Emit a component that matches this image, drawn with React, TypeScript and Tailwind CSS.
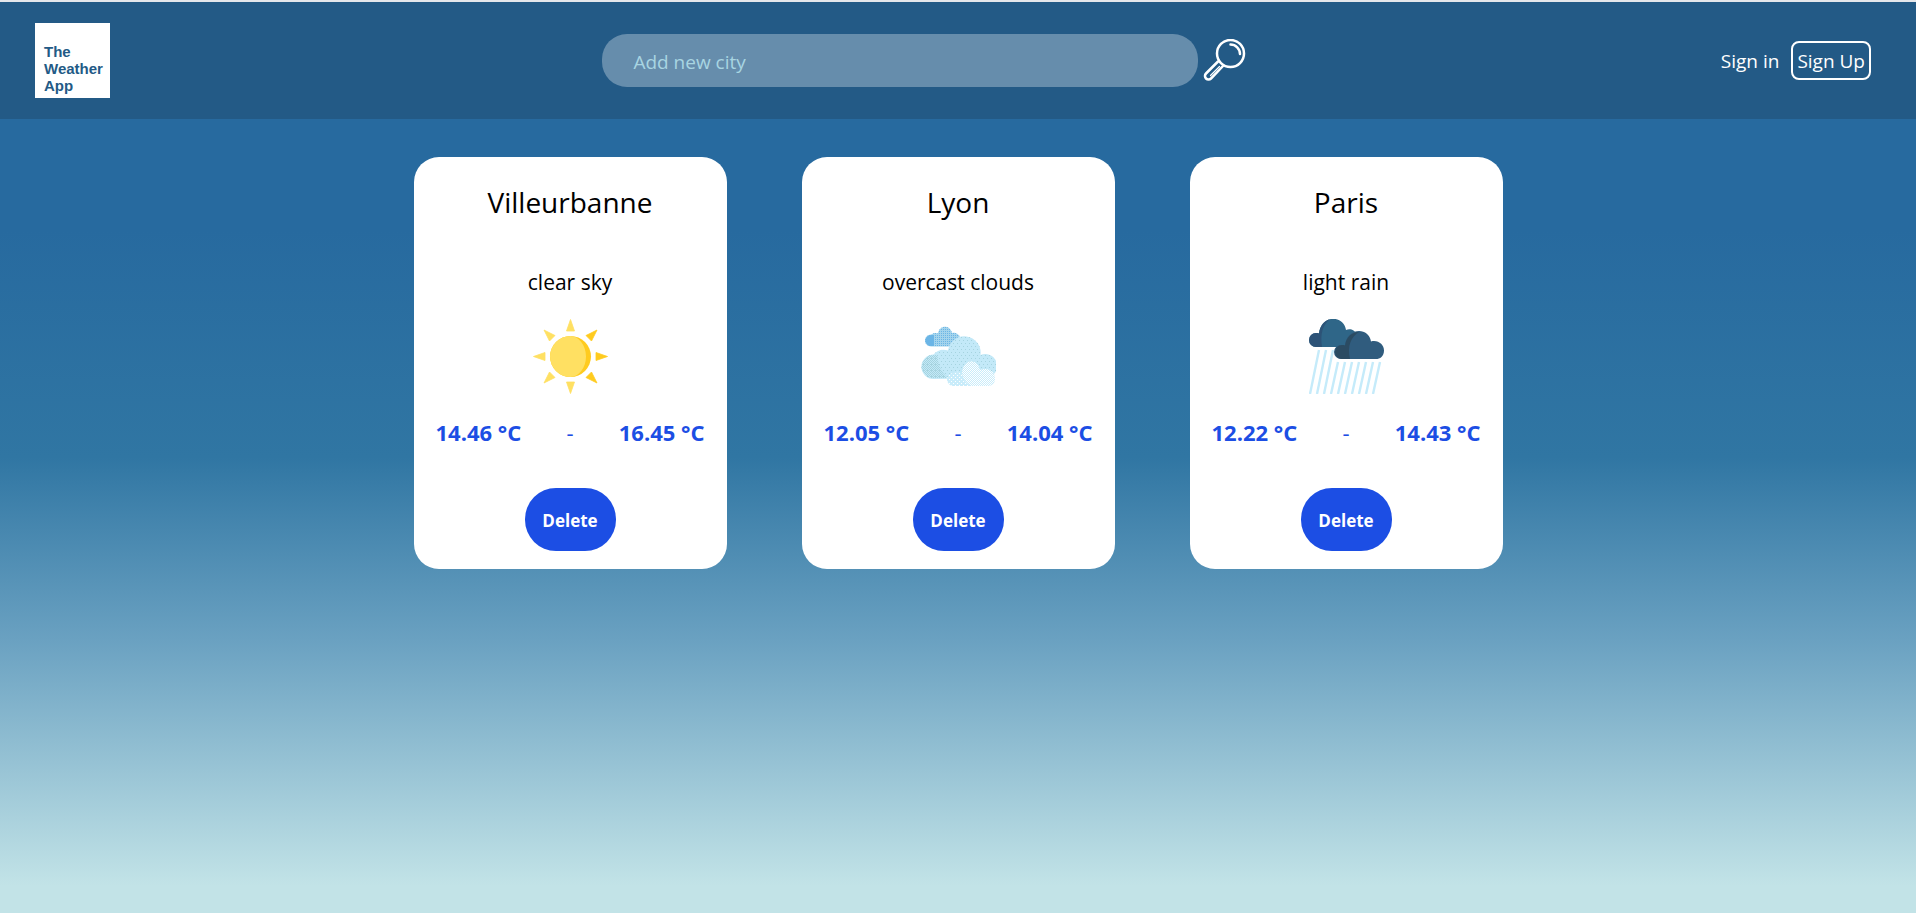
import type { FormEvent } from "react";

interface CityWeather {
  name: string;
  description: string;
  icon: "sun" | "clouds" | "rain";
  tempMin: number;
  tempMax: number;
}

const cities: CityWeather[] = [
  { name: "Villeurbanne", description: "clear sky", icon: "sun", tempMin: 14.46, tempMax: 16.45 },
  { name: "Lyon", description: "overcast clouds", icon: "clouds", tempMin: 12.05, tempMax: 14.04 },
  { name: "Paris", description: "light rain", icon: "rain", tempMin: 12.22, tempMax: 14.43 },
];

const SunIcon = () => (
  <svg viewBox="0 0 75 75" className="size-[75px]" aria-hidden="true">
    <g fill="#ffe062" stroke="#ffe062" strokeWidth="0.8" strokeLinejoin="round">
      <path d="M37.5 .5 41.500 12H33.500z" />
      <path d="M37.5 74.500 41.500 63H33.500z" />
      <path d="M.5 37.5 12 33.500v8z" />
      <path d="M11 11 22 16.500 16.500 22z" />
      <path d="M11 64 22 58.500 16.500 53z" />
    </g>
    <g fill="#ffcb1f" stroke="#ffcb1f" strokeWidth="0.8" strokeLinejoin="round">
      <path d="M74.500 37.500 63 33.500v8z" />
      <path d="M64 11 58.500 22 53 16.500z" />
      <path d="M64 64 58.500 53 53 58.500z" />
    </g>
    <circle cx="37.500" cy="37.500" r="20.500" fill="#ffcb1f" />
    <path
      d="M37.500 17a20.500 20.500 0 0 0 0 41c8 0 15.500-9 15.500-20.500S45.500 17 37.500 17z"
      fill="#ffe062"
    />
  </svg>
);

const CloudsIcon = () => (
  <svg viewBox="0 0 75 75" className="size-[75px]" aria-hidden="true">
    <defs>
      <pattern id="cloud-dots" width="4" height="6" patternUnits="userSpaceOnUse">
        <rect width="1" height="1" fill="#a5d3df" />
        <rect x="2" y="3" width="1" height="1" fill="#a5d3df" />
      </pattern>
      <pattern id="cloud-dots-dense" width="2" height="2" patternUnits="userSpaceOnUse">
        <rect width="1" height="1" fill="#a5d3df" />
        <rect x="1" y="1" width="1" height="1" fill="#a5d3df" />
      </pattern>
      <pattern id="cloud-light" width="2" height="2" patternUnits="userSpaceOnUse">
        <rect width="1" height="1" fill="#ffffff" />
        <rect x="1" y="1" width="1" height="1" fill="#ffffff" />
      </pattern>
      <pattern id="cloud-light-sparse" width="4" height="4" patternUnits="userSpaceOnUse">
        <rect width="1" height="1" fill="#ffffff" />
        <rect x="2" y="2" width="1" height="1" fill="#ffffff" />
      </pattern>
      <pattern id="cloud-dark" width="2" height="2" patternUnits="userSpaceOnUse">
        <rect width="1" height="1" fill="#6bb5e6" />
      </pattern>
    </defs>
    <path
      d="M10 27.500a6 6 0 0 1 0-12c2-1.500 5-2 7-1C18 6 29 5 31 14c4-1 7 2 8 4v9.500z"
      fill="#a4d4ec"
    />
    <path
      d="M10 27.500a6 6 0 0 1 0-12c2-1.500 5-2 7-1C18 6 29 5 31 14c4-1 7 2 8 4v9.500z"
      fill="url(#cloud-dark)"
    />
    <path d="M10 27a5.500 5.500 0 0 1 0-11h3v11z" fill="#6bb5e6" />
    <path
      d="M12.500 60a12.200 12.200 0 0 1 0-24.400C16 31 22 29.500 27 31.500A16.300 16.300 0 0 1 59.500 36 12 12 0 1 1 63 59z"
      fill="#c3e9f8"
    />
    <path
      d="M12.500 60a12.200 12.200 0 0 1 0-24.400C16 31 22 29.500 27 31.500A16.300 16.300 0 0 1 59.500 36 12 12 0 1 1 63 59z"
      fill="url(#cloud-dots)"
    />
    <path
      d="M12.500 59a11.500 11.500 0 0 1 0-23l4 0C17 46 20 53 27 59z"
      fill="url(#cloud-dots-dense)"
    />
    <path
      d="M33 67a6.500 6.500 0 0 1-1-13c2-1.500 6-2 9 0 1-14 15-16 18-3 9-3 15 2 15 9 0 4-3 7-7 7z"
      fill="#c9ecfa"
    />
    <path
      d="M33 67a6.500 6.500 0 0 1-1-13c2-1.500 6-2 9 0 1 6 4 10 9 13z"
      fill="url(#cloud-light-sparse)"
    />
    <path
      d="M41 54c1-14 15-16 18-3 9-3 15 2 15 9 0 4-3 7-7 7H50c-5-3-8-7-9-13z"
      fill="url(#cloud-light)"
    />
  </svg>
);

const RainIcon = () => (
  <svg viewBox="0 0 75 75" className="size-[75px]" aria-hidden="true">
    <g stroke="#c5ebfa" strokeWidth="2.400">
      <path d="M10 31 1 75" />
      <path d="M17 31 8 75" />
      <path d="M24 31 15 75" />
      <path d="M29 43 22 75" />
      <path d="M36 43 29 75" />
      <path d="M43 43 36 75" />
      <path d="M50 43 43 75" />
      <path d="M57 43 50 75" />
      <path d="M64 43 57 75" />
      <path d="M71 43 64 75" />
    </g>
    <path
      d="M7 28a7 7 0 0 1 0-14c1 0 2 0 3 .5C12-5 35-4 37 11c4-2 9 0 10 4l-6 13z"
      fill="#2f6688"
    />
    <path
      d="M7 28a7 7 0 0 1 0-14c1 0 2 0 3 .5C11 7 15 2 21 0c-7 6-10 14-8 28z"
      fill="#2d5377"
    />
    <path
      d="M32 40a6.500 6.500 0 0 1 0-14c2 0 3 0 4 .5C38 8 60 8 62 22.500c7-2 13 3 13 9s-4 8.500-8 8.500z"
      fill="#305c7e"
    />
    <path
      d="M33 40a7 7 0 0 1 0-14c1 0 2 0 3 .5C37 18 43 13 50 13c-8 5-12 14-9 27z"
      fill="#2b4b62"
    />
  </svg>
);

const SearchIcon = () => (
  <svg
    viewBox="0 0 44 44"
    fill="none"
    stroke="#ffffff"
    strokeWidth="2.500"
    strokeLinecap="round"
    strokeLinejoin="round"
    className="size-11"
    aria-hidden="true"
  >
    <circle cx="28.500" cy="14.500" r="13.500" />
    <path d="M28.500 5.500a9.500 9.500 0 0 1 9.500 9.500" />
    <path d="M16 22.500 4 34.500a3 3 0 0 0 5 5L21 27" />
    <path d="M17.500 27.500 8.500 36.500" strokeWidth="1.200" />
  </svg>
);

const icons = {
  sun: SunIcon,
  clouds: CloudsIcon,
  rain: RainIcon,
};

const Header = () => {
  const handleSubmit = (e: FormEvent) => e.preventDefault();

  return (
    <header className="flex items-center justify-between bg-[#235a86] px-[35px] py-[21px]">
      <a
        href="#"
        className="flex size-[75px] items-end bg-white pb-1 pl-[9px] font-['Liberation_Sans',Arial,sans-serif] text-[15px] leading-[17px] font-bold text-[#235a86]"
      >
        <span>
          The
          <br />
          Weather
          <br />
          App
        </span>
      </a>
      <form onSubmit={handleSubmit} className="flex items-center gap-1 pl-[18px]">
        <input
          type="text"
          aria-label="Add new city"
          placeholder="Add new city"
          className="h-[53px] w-[596px] rounded-[25px] bg-[#668dac] px-[31px] pt-[2px] text-[19px] text-white outline-none placeholder:text-[#a8d5e2]"
        />
        <button type="submit" aria-label="Search" className="cursor-pointer">
          <SearchIcon />
        </button>
      </form>
      <nav className="flex items-center justify-end gap-3 pr-[10px] text-[19px] leading-[33px] text-white">
        <a href="#" className="pt-[2px]">
          Sign in
        </a>
        <a href="#" className="rounded-lg border-2 border-white px-1 pt-[2px]">
          Sign Up
        </a>
      </nav>
    </header>
  );
};

const CityCard = ({ name, description, icon, tempMin, tempMax }: CityWeather) => {
  const Icon = icons[icon];

  return (
    <article className="flex flex-col items-center rounded-[25px] bg-white px-[22px] pt-[25px] pb-[18px] text-black">
      <h2 className="text-[28px] leading-10">{name}</h2>
      <p className="mt-11 mb-[21px] text-[21px] leading-8">{description}</p>
      <Icon />
      <div className="mt-[22px] grid w-full grid-cols-[1fr_auto_1fr] text-[22px] leading-8 text-[#1c4ee4]">
        <strong>{tempMin.toFixed(2)} °C</strong>
        <span>-</span>
        <strong className="text-right">{tempMax.toFixed(2)} °C</strong>
      </div>
      <button
        type="button"
        className="mt-10 h-[63px] w-[91px] cursor-pointer rounded-[31px] bg-[#1c4ee4] pt-[2px] text-[17px] font-bold text-white"
      >
        Delete
      </button>
    </article>
  );
};

const App = () => {
  return (
    <div className="min-h-screen border-t-2 border-gray-200 bg-linear-[180deg,#276a9f_0%,#276a9f_25%,#3076a3_50%,#6aa1c1_70%,#c2e3e7_97%] font-['Open_Sans','Segoe_UI',sans-serif]">
      <Header />
      <main className="mx-auto mt-[38px] grid max-w-[1089px] grid-cols-3 gap-[75px]">
        {cities.map((city) => (
          <CityCard key={city.name} {...city} />
        ))}
      </main>
    </div>
  );
};

export default App;
